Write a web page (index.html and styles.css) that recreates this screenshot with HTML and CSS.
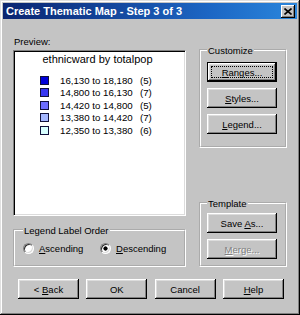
FILE: index.html
```html
<!DOCTYPE html>
<html>
<head>
<meta charset="utf-8">
<link rel="stylesheet" href="styles.css">
</head>
<body>
<div class="window">
  <div class="titlebar">
    <span class="title">Create Thematic Map - Step 3 of 3</span>
    <span class="close"><svg width="8" height="7" viewBox="0 0 8 7"><path d="M0.5 0.5L7.5 6.5M7.5 0.5L0.5 6.5" stroke="#000" stroke-width="1.6"/></svg></span>
  </div>
  <div class="body">
    <div class="main">
      <div class="left">
        <div class="label">Preview:</div>
        <div class="preview">
          <div class="ptitle">ethnicward by totalpop</div>
          <ul class="rows">
            <li class="row"><span class="swatch c1"></span><span class="range">16,130 to 18,180</span><span class="count">(5)</span></li>
            <li class="row"><span class="swatch c2"></span><span class="range">14,800 to 16,130</span><span class="count">(7)</span></li>
            <li class="row"><span class="swatch c3"></span><span class="range">14,420 to 14,800</span><span class="count">(5)</span></li>
            <li class="row"><span class="swatch c4"></span><span class="range">13,380 to 14,420</span><span class="count">(7)</span></li>
            <li class="row"><span class="swatch c5"></span><span class="range">12,350 to 13,380</span><span class="count">(6)</span></li>
          </ul>
        </div>
        <fieldset class="group order">
          <legend>Legend Label Order</legend>
          <div class="radios">
            <label class="radio first"><span class="dot"></span><span><u>A</u>scending</span></label>
            <label class="radio"><span class="dot on"></span><span><u>D</u>escending</span></label>
          </div>
        </fieldset>
      </div>
      <div class="right">
        <fieldset class="group customize">
          <legend>Customize</legend>
          <div class="stack">
            <button class="btn side default"><u>R</u>anges...</button>
            <button class="btn side"><u>S</u>tyles...</button>
            <button class="btn side"><u>L</u>egend...</button>
          </div>
        </fieldset>
        <fieldset class="group template">
          <legend>Template</legend>
          <div class="stack">
            <button class="btn side">Save <u>A</u>s...</button>
            <button class="btn side disabled"><u>M</u>erge...</button>
          </div>
        </fieldset>
      </div>
    </div>
    <div class="buttons">
      <button class="btn bottom">&lt; <u>B</u>ack</button>
      <button class="btn bottom">OK</button>
      <button class="btn bottom">Cancel</button>
      <button class="btn bottom"><u>H</u>elp</button>
    </div>
  </div>
</div>
</body>
</html>
```
FILE: styles.css
```css
* { box-sizing: border-box; }
html, body { margin: 0; padding: 0; background: #c4c4c4; }
body {
  font-family: "Liberation Sans", Arial, sans-serif;
  font-size: 9.5px;
  color: #000;
}
.window {
  width: 300px;
  height: 315px;
  background: #c4c4c4;
  padding: 3px;
  display: flex;
  flex-direction: column;
  box-shadow: inset -1px -1px 0 #000, inset 1px 1px 0 #e0e0e0,
              inset -2px -2px 0 #808080, inset 2px 2px 0 #fff;
}
.titlebar {
  height: 16px;
  display: flex;
  align-items: center;
  justify-content: space-between;
  padding: 0 2px 0 3px;
  background: linear-gradient(90deg, #0a2470 0%, #1c66c4 70%, #2a86dc 100%);
}
.title {
  color: #fff;
  font-weight: bold;
  font-size: 11px;
  line-height: 16px;
  white-space: nowrap;
}
.close {
  width: 14px;
  height: 13px;
  background: #c4c4c4;
  display: flex;
  align-items: center;
  justify-content: center;
  box-shadow: inset -1px -1px 0 #000, inset 1px 1px 0 #fff, inset -2px -2px 0 #808080;
}
.body {
  flex: 1;
  display: flex;
  flex-direction: column;
  padding: 16px 10px 0 10px;
}
.main {
  display: flex;
  gap: 13px;
}
.left {
  width: 173px;
  display: flex;
  flex-direction: column;
}
.label {
  line-height: 13px;
  height: 13px;
  margin-left: 1px;
}
.preview {
  margin-top: 2px;
  height: 166px;
  background: #fff;
  border: 1px solid;
  border-color: #808080 #fff #fff #808080;
  box-shadow: inset 1px 1px 0 #000, inset -1px -1px 0 #dcdcdc;
  padding: 2px 0 0 0;
}
.ptitle {
  font-size: 11px;
  line-height: 13px;
  text-align: center;
  padding-right: 4px;
}
.rows {
  list-style: none;
  margin: 7.75px 0 0 0;
  padding: 0 0 0 26px;
  font-size: 9.7px;
}
.row {
  height: 12.5px;
  display: flex;
  align-items: center;
}
.swatch {
  width: 9px;
  height: 9px;
  border: 1px solid #10103a;
  margin-right: 11px;
  flex: none;
}
.c1 { background: #0000d8; }
.c2 { background: #3636f2; }
.c3 { background: #6c6cfc; }
.c4 { background: #a4b6ff; }
.c5 { background: #d8ffff; }
.range { width: 80px; white-space: nowrap; }
.count { white-space: nowrap; }

.group {
  margin: 0;
  padding: 0;
  min-width: 0;
  border: 2px groove #fff;
}
.group legend {
  padding: 0 1px;
  line-height: 13px;
  height: 13px;
  background: #c4c4c4;
}
.order {
  margin-top: 7.5px;
  height: 43.5px;
  padding: 5px 0 0 8px;
}
.radios {
  display: flex;
  align-items: center;
  height: 13px;
}
.radio {
  display: flex;
  align-items: center;
  gap: 5px;
}
.radio.first { width: 77px; }
.dot {
  width: 11px;
  height: 11px;
  border-radius: 50%;
  background: #fff;
  border: 1px solid;
  border-color: #808080 #fff #fff #808080;
  box-shadow: inset 1px 1px 0 #303030, inset -1px -1px 0 #d8d8d8;
}
.dot.on {
  background: radial-gradient(circle, #000 0 1.8px, #fff 2.4px);
}
.right {
  width: 88px;
  display: flex;
  flex-direction: column;
  justify-content: space-between;
  padding-top: 8.5px;
}
.customize {
  height: 104.5px;
  padding: 5.5px 0 0 6px;
}
.template {
  height: 70.5px;
  padding: 3.5px 0 0 6px;
}
.stack {
  display: flex;
  flex-direction: column;
  gap: 6px;
}
.btn {
  height: 20px;
  background: #c4c4c4;
  border: none;
  padding: 0;
  font-family: "Liberation Sans", Arial, sans-serif;
  font-size: 9.5px;
  color: #000;
  box-shadow: inset -1px -1px 0 #000, inset 1px 1px 0 #fff,
              inset -2px -2px 0 #808080, inset 2px 2px 0 #dcdcdc;
}
.btn.side { width: 70px; }
.btn.default {
  border: 1px solid #000;
  outline: 1px dotted #000;
  outline-offset: -5px;
}
.btn.disabled {
  color: #808080;
  text-shadow: 1px 1px 0 #fff;
}
.buttons {
  margin-top: 12px;
  margin-left: 5px;
  width: 266px;
  display: flex;
  justify-content: space-between;
}
.btn.bottom { width: 61px; }
```
